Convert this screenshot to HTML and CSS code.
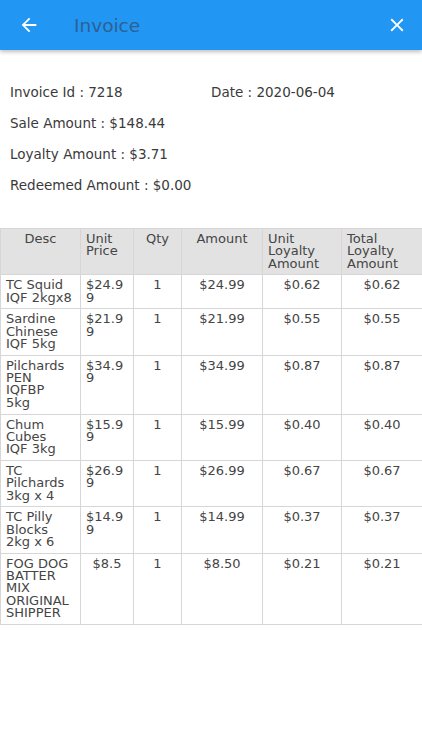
FILE: index.html
```html
<!DOCTYPE html>
<html>
<head>
<meta charset="utf-8">
<link rel="stylesheet" href="styles.css">
</head>
<body>
<header class="appbar">
  <svg class="icon back" viewBox="0 0 24 24" width="22" height="22"><path d="M20 11H7.83l5.59-5.59L12 4l-8 8 8 8 1.41-1.41L7.83 13H20v-2z" fill="#fff"/></svg>
  <div class="title">Invoice</div>
  <svg class="icon close" viewBox="0 0 24 24" width="22" height="22"><path d="M19 6.41L17.59 5 12 10.59 6.41 5 5 6.41 10.59 12 5 17.59 6.41 19 12 13.41 17.59 19 19 17.59 13.41 12z" fill="#fff"/></svg>
</header>
<section class="info">
  <div class="info-row"><span class="half">Invoice Id : 7218</span><span class="half">Date : 2020-06-04</span></div>
  <div class="info-row">Sale Amount : $148.44</div>
  <div class="info-row">Loyalty Amount : $3.71</div>
  <div class="info-row">Redeemed Amount : $0.00</div>
</section>
<table class="items">
  <colgroup>
    <col class="c1"><col class="c2"><col class="c3"><col class="c4"><col class="c5"><col class="c6">
  </colgroup>
  <thead>
    <tr>
      <th><span>Desc</span></th>
      <th><span>Unit Price</span></th>
      <th><span>Qty</span></th>
      <th><span>Amount</span></th>
      <th><span>Unit Loyalty Amount</span></th>
      <th><span>Total Loyalty Amount</span></th>
    </tr>
  </thead>
  <tbody>
    <tr><td><span>TC Squid IQF 2kgx8</span></td><td><span>$24.99</span></td><td><span>1</span></td><td><span>$24.99</span></td><td><span>$0.62</span></td><td><span>$0.62</span></td></tr>
    <tr><td><span>Sardine Chinese IQF 5kg</span></td><td><span>$21.99</span></td><td><span>1</span></td><td><span>$21.99</span></td><td><span>$0.55</span></td><td><span>$0.55</span></td></tr>
    <tr><td><span>Pilchards PEN IQFBP 5kg</span></td><td><span>$34.99</span></td><td><span>1</span></td><td><span>$34.99</span></td><td><span>$0.87</span></td><td><span>$0.87</span></td></tr>
    <tr><td><span>Chum Cubes IQF&nbsp;3kg</span></td><td><span>$15.99</span></td><td><span>1</span></td><td><span>$15.99</span></td><td><span>$0.40</span></td><td><span>$0.40</span></td></tr>
    <tr><td><span>TC Pilchards 3kg x 4</span></td><td><span>$26.99</span></td><td><span>1</span></td><td><span>$26.99</span></td><td><span>$0.67</span></td><td><span>$0.67</span></td></tr>
    <tr><td><span>TC Pilly Blocks 2kg x 6</span></td><td><span>$14.99</span></td><td><span>1</span></td><td><span>$14.99</span></td><td><span>$0.37</span></td><td><span>$0.37</span></td></tr>
    <tr><td><span>FOG DOG BATTER MIX ORIGINAL SHIPPER</span></td><td><span>$8.5</span></td><td><span>1</span></td><td><span>$8.50</span></td><td><span>$0.21</span></td><td><span>$0.21</span></td></tr>
  </tbody>
</table>
</body>
</html>
```
FILE: styles.css
```css
html, body {
  margin: 0;
  padding: 0;
  background: #fff;
}
body {
  font-family: "DejaVu Sans", "Liberation Sans", sans-serif;
  color: #333;
}
.appbar {
  height: 50px;
  background: #2196f3;
  display: flex;
  align-items: center;
  padding: 0 14px 0 18px;
  box-shadow: 0 2px 4px rgba(0,0,0,0.25);
  position: relative;
}
.icon { display: block; flex: none; }
.title {
  flex: 1;
  margin-left: 34px;
  font-size: 18.5px;
  color: #2d6194;
}
.info {
  padding: 32px 10px 0 10px;
  height: 146px;
}
.info-row {
  display: flex;
  font-size: 13.5px;
  height: 31px;
  line-height: 20px;
  color: #3a3a3a;
}
.half { width: 201px; }
.items {
  border-collapse: collapse;
  width: 422px;
  table-layout: fixed;
  font-size: 13px;
  line-height: 12.3px;
  color: #454545;
}
.c1 { width: 80px; }
.c2 { width: 53px; }
.c3 { width: 48px; }
.c4 { width: 81px; }
.c5 { width: 79px; }
.c6 { width: 81px; }
.items th, .items td {
  border: 1px solid #d6d6d6;
  padding: 4px 5px 4.5px 5px;
  vertical-align: top;
  text-align: center;
  font-weight: normal;
}
.items td:first-child { padding-right: 8px; }
.items th { background: #e2e2e2; }
.items span {
  display: inline-block;
  text-align: left;
  vertical-align: top;
  overflow-wrap: anywhere;
}
```
